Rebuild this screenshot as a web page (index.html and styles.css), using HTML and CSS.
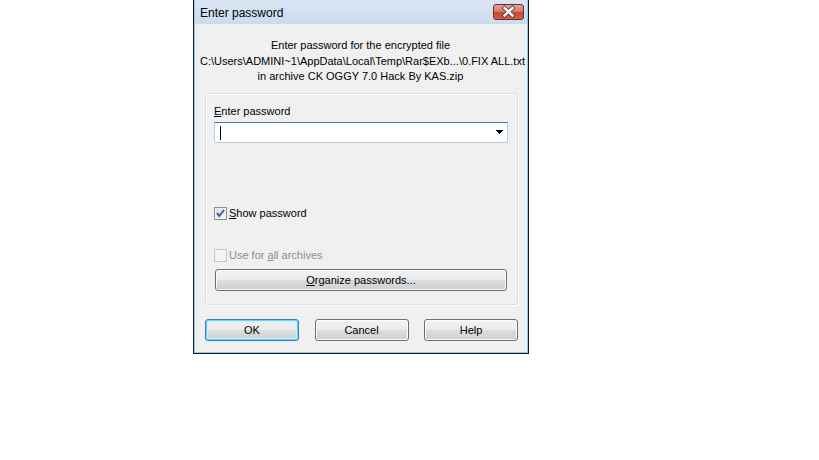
FILE: index.html
```html
<!DOCTYPE html>
<html>
<head>
<meta charset="utf-8">
<title>Enter password</title>
<link rel="stylesheet" href="styles.css">
</head>
<body>
<div class="dialog">
  <div class="frame">
    <div class="titlebar">
      <span class="title">Enter password</span>
      <span class="close">
        <svg width="31" height="16" viewBox="0 0 31 16">
          <path d="M11.5 4 L19.5 11.5 M19.5 4 L11.5 11.5" stroke="#5e3a36" stroke-width="4.2" stroke-linecap="square"/>
          <path d="M11.5 4 L19.5 11.5 M19.5 4 L11.5 11.5" stroke="#ffffff" stroke-width="2.4" stroke-linecap="square"/>
        </svg>
      </span>
    </div>
    <div class="client">
      <div class="info">
        <div>Enter password for the encrypted file</div>
        <div>C:\Users\ADMINI~1\AppData\Local\Temp\Rar$EXb...\0.FIX ALL.txt</div>
        <div>in archive CK OGGY 7.0 Hack By KAS.zip</div>
      </div>
      <div class="group">
        <div class="label"><u>E</u>nter password</div>
        <div class="combo">
          <span class="caret"></span>
          <svg class="arrow" width="7" height="4" viewBox="0 0 7 4"><path d="M0 0 H7 V1 H6 V2 H5 V3 H4 V4 H3 V3 H2 V2 H1 V1 H0 Z" fill="#000"/></svg>
        </div>
        <div class="check show">
          <span class="box">
            <svg width="11" height="11" viewBox="0 0 11 11"><path d="M2 5.2 L4.3 8 L9 2" fill="none" stroke="#3a5a9c" stroke-width="2"/></svg>
          </span>
          <span><u>S</u>how password</span>
        </div>
        <div class="check disabled">
          <span class="box"></span>
          <span>Use for <u>a</u>ll archives</span>
        </div>
        <div class="btn organize"><u>O</u>rganize passwords...</div>
      </div>
      <div class="buttons">
        <div class="btn default">OK</div>
        <div class="btn">Cancel</div>
        <div class="btn">Help</div>
      </div>
    </div>
  </div>
</div>
</body>
</html>
```

FILE: styles.css
```css
html, body {
  margin: 0;
  padding: 0;
  background: #ffffff;
}

body {
  font-family: "Liberation Sans", Arial, sans-serif;
  font-size: 11px;
  color: #000;
}

.dialog {
  margin-left: 193px;
  width: 336px;
  height: 354px;
  box-sizing: border-box;
  border: 1px solid #1b1b1b;
  border-top: none;
  background: #f0f0f0;
}

.frame {
  height: 100%;
  box-sizing: border-box;
  border: 1px solid #8ccbef;
  border-top: none;
  display: flex;
  flex-direction: column;
}

.titlebar {
  height: 24px;
  flex: none;
  display: flex;
  align-items: flex-start;
  justify-content: space-between;
  background: linear-gradient(#d9e5f3, #cbdbee);
}

.title {
  font-size: 12px;
  padding-left: 5px;
  padding-top: 6px;
  line-height: 14px;
  color: #000;
}

.close {
  margin-top: 4px;
  margin-right: 3px;
  width: 31px;
  height: 16px;
  box-sizing: border-box;
  border: 1px solid #6d2c25;
  border-radius: 3px;
  background: linear-gradient(#e7a596 0%, #d97a68 45%, #c7462f 55%, #d3614a 100%);
  overflow: hidden;
}

.close svg {
  display: block;
  margin: -1px 0 0 -1px;
}

.client {
  flex: 1;
  padding: 14px 9px 0 10px;
}

.info {
  height: 46px;
  text-align: center;
  line-height: 15.5px;
  margin-left: -5px;
  margin-right: -3px;
  white-space: nowrap;
}

.group {
  margin-top: 9px;
  height: 212px;
  box-sizing: border-box;
  border: 1px solid #d5dfe5;
  border-radius: 3px;
  box-shadow: 1px 1px 0 #ffffff, inset 1px 1px 0 #ffffff;
  padding: 10px 9px 0 8px;
}

.label {
  line-height: 15px;
}

.combo {
  margin-top: 3px;
  height: 21px;
  box-sizing: border-box;
  background: #fff;
  border: 1px solid #b5cfe7;
  border-top-color: #3d7bad;
  display: flex;
  align-items: center;
  justify-content: space-between;
  padding: 0 4px 0 5px;
}

.caret {
  width: 1px;
  height: 14px;
  background: #000;
}

.arrow {
  display: block;
  margin-top: -1px;
}

.check {
  display: flex;
  align-items: center;
  gap: 2px;
  height: 13px;
  line-height: 13px;
}

.check.show {
  margin-top: 64px;
}

.check.disabled {
  margin-top: 29px;
  color: #8d8d8d;
}

.box {
  width: 13px;
  height: 13px;
  box-sizing: border-box;
  border: 1px solid #8e8f8f;
  background: linear-gradient(135deg, #dcdcdc, #fbfbfb);
  box-shadow: inset 0 0 0 1px #f4f4f4;
  display: flex;
  align-items: center;
  justify-content: center;
}

.check.disabled .box {
  border-color: #c6c6c6;
  background: #f4f4f4;
  box-shadow: none;
}

.btn {
  height: 22px;
  box-sizing: border-box;
  border: 1px solid #707070;
  border-radius: 3px;
  background: linear-gradient(#f2f2f2 0%, #ebebeb 48%, #dddddd 52%, #cfcfcf 100%);
  box-shadow: inset 0 0 0 1px #fbfbfb;
  display: flex;
  align-items: center;
  justify-content: center;
  line-height: 13px;
}

.organize {
  margin: 7px 0 0 1px;
  width: 292px;
}

.buttons {
  margin-top: 14px;
  display: flex;
  justify-content: space-between;
  width: 313px;
}

.buttons .btn {
  width: 94px;
}

.btn.default {
  border-color: #3c7fb1;
  box-shadow: inset 0 0 0 1px #6fd3f7, inset 0 0 0 2px #c9eefb;
}

u {
  text-decoration: underline;
  text-underline-offset: 1px;
}
```
